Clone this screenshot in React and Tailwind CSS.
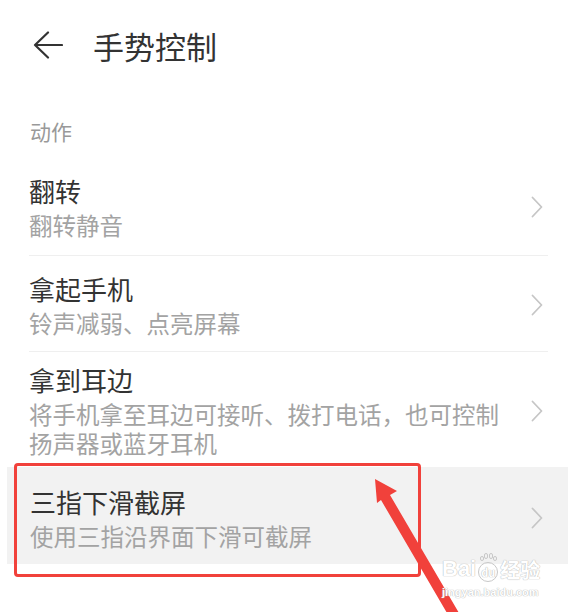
const FONT = { fontFamily: '"Noto Sans CJK SC", "Noto Sans", sans-serif' };

const rows = [
  { title: "翻转", sub: "翻转静音", pad: "pt-[16px] pb-[15px]" },
  { title: "拿起手机", sub: "铃声减弱、点亮屏幕", pad: "pt-[16px] pb-[13px]" },
  { title: "拿到耳边", sub: "将手机拿至耳边可接听、拨打电话，也可控制扬声器或蓝牙耳机", pad: "pt-[11px] pb-[9px]" },
];

function Chevron() {
  return (
    <svg width="12" height="22" viewBox="0 0 12 22" className="shrink-0">
      <path d="M1.5 1.5 L10.5 11 L1.5 20.5" fill="none" stroke="#c6c6c6" strokeWidth="1.8" strokeLinecap="round" strokeLinejoin="round" />
    </svg>
  );
}

function Row({ title, sub, pad, last }) {
  return (
    <div className={`flex items-center justify-between pr-[5px] ${pad} ${last ? "" : "border-b border-[#efefef]"}`}>
      <div className="w-[480px]">
        <div className="text-[26px] leading-[34px] text-[#333]">{title}</div>
        <div className="mt-[3px] text-[23.5px] leading-[29px] text-[#a3a3a3]">{sub}</div>
      </div>
      <Chevron />
    </div>
  );
}

export default function App() {
  return (
    <div className="relative h-[612px] w-full overflow-hidden bg-white" style={FONT}>

      {/* header */}
      <div className="flex h-[92px] items-center pl-[33px]">
        <svg width="30" height="28" viewBox="0 0 30 28" className="mt-[-2px]">
          <path d="M2 14 H29 M2 14 L15 1.5 M2 14 L15 26.5" fill="none" stroke="#333" strokeWidth="2.2" strokeLinecap="round" strokeLinejoin="round" />
        </svg>
        <h1 className="ml-[30px] text-[31px] leading-[40px] text-[#333]">手势控制</h1>
      </div>

      {/* section label */}
      <div className="px-[30px] pt-[26px] pb-[14px] text-[21px] leading-[26px] text-[#999]">动作</div>

      {/* list */}
      <div className="px-[29px]">
        {rows.map((r, i) => (
          <Row key={r.title} {...r} last={i === rows.length - 1} />
        ))}

        <div className="ml-[-22px] mr-[-20px] flex items-center justify-between bg-[#f2f2f2] pl-[23px] pr-[25px] pt-[18px] pb-[13px]">
          <div className="w-[480px]">
            <div className="text-[26px] leading-[34px] text-[#333]">三指下滑截屏</div>
            <div className="mt-[3px] text-[23.5px] leading-[29px] text-[#a3a3a3]">使用三指沿界面下滑可截屏</div>
          </div>
          <Chevron />
        </div>
      </div>

      {/* annotation box */}
      <div className="absolute left-[14px] top-[463px] h-[114px] w-[407px] rounded-[4px] border-[3px] border-[#f1413b]" />

      {/* annotation arrow */}
      <svg className="absolute left-[370px] top-[475px]" width="95" height="137" viewBox="0 0 95 137">
        <polygon points="5,4 27,16 20,20 89,138 77,138 11,25 7,28" fill="#f1413b" />
      </svg>

      {/* watermark */}
      <div className="absolute left-[442px] top-[556px] text-white [text-shadow:0_0_1px_#b8b8b8,0_0_1px_#b8b8b8]">
        <div className="flex items-end">
          <span className="text-[22px] font-bold leading-[26px]" style={{ fontFamily: '"Liberation Sans", sans-serif' }}>Bai</span>
          <div className="relative ml-[2px] flex h-[20px] w-[20px] items-center justify-center rounded-full border border-[#c8c8c8] text-[11px] font-bold leading-none">
            du
            <span className="absolute left-[1px] top-[-7px] h-[5px] w-[4px] rounded-full border border-[#c8c8c8]" />
            <span className="absolute left-[5px] top-[-10px] h-[6px] w-[4px] rounded-full border border-[#c8c8c8]" />
            <span className="absolute left-[10px] top-[-10px] h-[6px] w-[4px] rounded-full border border-[#c8c8c8]" />
            <span className="absolute left-[14px] top-[-7px] h-[5px] w-[4px] rounded-full border border-[#c8c8c8]" />
          </div>
          <span className="ml-[2px] text-[20px] font-bold leading-[24px]">经验</span>
        </div>
        <div className="mt-[4px] text-[11px] font-bold leading-[12px]" style={{ fontFamily: '"Liberation Sans", sans-serif' }}>jingyan.baidu.com</div>
      </div>
    </div>
  );
}
